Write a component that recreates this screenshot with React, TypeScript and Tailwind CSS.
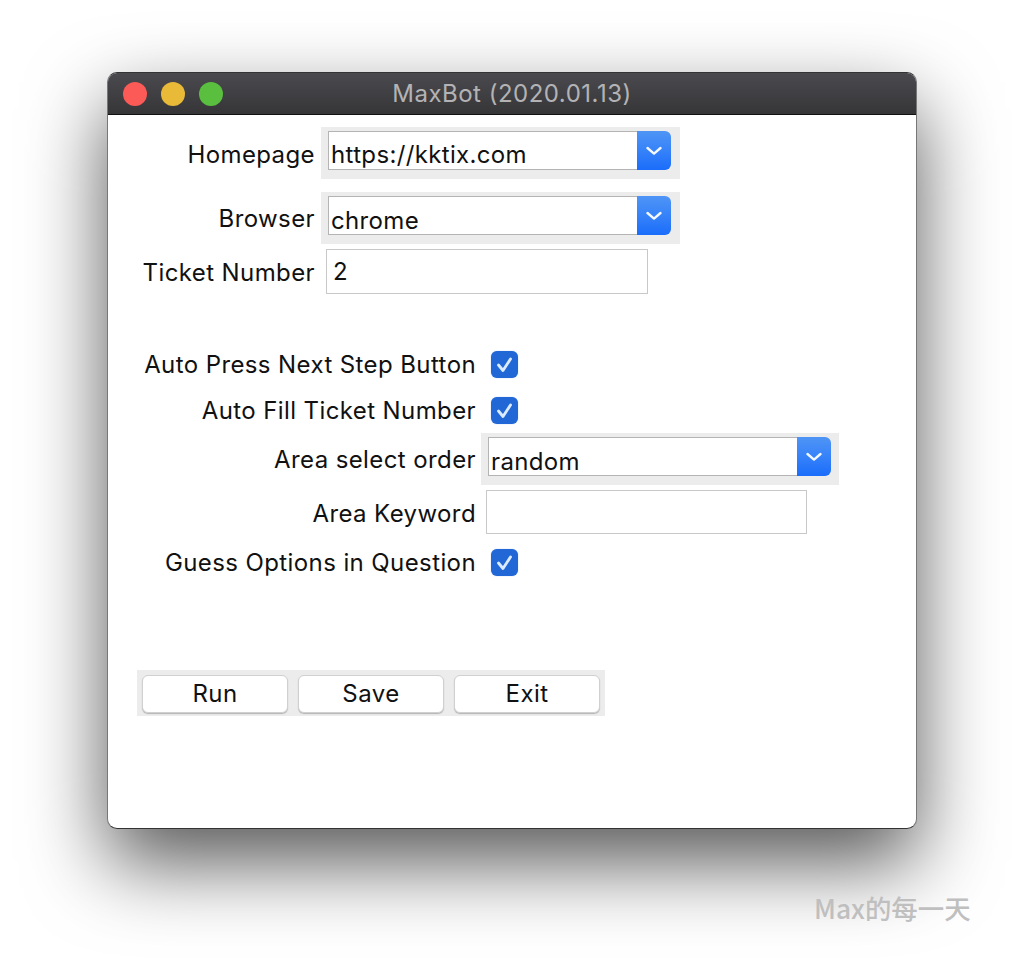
import React from 'react';

const FONT = "font-['Inter','Noto_Sans',sans-serif]";

const Chevron = () => (
  <svg width="18" height="12" viewBox="0 0 18 12" fill="none">
    <path d="M2.5 3l6.5 5.6L15.5 3" stroke="#f4f8ff" strokeWidth="2.4" strokeLinecap="round" strokeLinejoin="round" />
  </svg>
);

const Select: React.FC<{ value: string; textClass?: string; className?: string; width: string }> = ({ value, textClass, className, width }) => (
  <div className={`h-[52px] bg-[#ececec] pl-[7px] pt-[4px] ${width} ${className ?? ''}`}>
    <div className="flex h-[39px] w-[343px]">
      <div className={`flex-1 border border-r-0 border-[#b4b4b4] bg-white pl-[2px] text-[24px] leading-[38px] tracking-[0.35px] text-[#111] ${textClass ?? ''}`}>
        {value}
      </div>
      <div className="flex w-[34px] items-center justify-center rounded-r-[6px] bg-gradient-to-b from-[#4f95f6] to-[#1a6dfb]">
        <Chevron />
      </div>
    </div>
  </div>
);

const Checkbox = () => (
  <div className="flex h-[27px] w-[27px] items-center justify-center rounded-[6px] bg-[#2267d6] shadow-[0_0_1px_#7fa8e8]">
    <svg width="21" height="19" viewBox="0 0 21 19" fill="none">
      <path d="M4.5 10l4.5 5.5L16.5 4" stroke="#dcecff" strokeWidth="2.8" strokeLinecap="round" strokeLinejoin="round" />
    </svg>
  </div>
);

const Label: React.FC<{ children: React.ReactNode; width: string }> = ({ children, width }) => (
  <div className={`shrink-0 text-right text-[24px] tracking-[0.4px] text-[#111] ${width}`}>{children}</div>
);

const ActionButton: React.FC<{ label: string }> = ({ label }) => (
  <div className="flex h-[38px] w-[146px] items-center justify-center rounded-[6px] border border-[#d0d0d0] bg-white text-[24px] tracking-[0.45px] text-[#111] shadow-[0_1px_1px_#b5b5b5]">
    {label}
  </div>
);

export default function App() {
  return (
    <div className={`relative h-[970px] w-[1024px] overflow-hidden bg-white pl-[107px] pt-[72px] ${FONT}`}>
      <div className="h-[757px] w-[810px] overflow-hidden rounded-[10px] border border-x-[#777] border-y-[#333] bg-white shadow-[0_34px_80px_rgba(0,0,0,0.66)]">
        <div className="relative flex h-[42px] items-center justify-center border-b border-[#111] bg-gradient-to-b from-[#4a4a4e] to-[#363639]">
          <div className="absolute left-[15px] top-[9px] flex gap-[14px]">
            <span className="h-[24px] w-[24px] rounded-full bg-[#fb5a57]" />
            <span className="h-[24px] w-[24px] rounded-full bg-[#e8ba38]" />
            <span className="h-[24px] w-[24px] rounded-full bg-[#5abf3f]" />
          </div>
          <span className="text-[24px] tracking-[0.5px] text-[#b3b3b5]">MaxBot (2020.01.13)</span>
        </div>

        <div className="pl-[29px] pt-[12px]">
          <div className="flex h-[52px]">
            <Label width="w-[178px] pt-[10px]">Homepage</Label>
            <Select value="https://kktix.com" textClass="pt-[4px]" width="ml-[6px] w-[359px]" />
          </div>
          <div className="mt-[13px] flex h-[52px]">
            <Label width="w-[178px] pt-[9px]">Browser</Label>
            <Select value="chrome" textClass="pt-[5px]" width="ml-[6px] w-[359px]" />
          </div>
          <div className="mt-[5px] flex h-[45px]">
            <Label width="w-[178px] pt-[6px]">Ticket Number</Label>
            <div className="ml-[11px] h-[45px] w-[322px] border border-[#c8c8c8] bg-white pl-[6px] text-[24px] leading-[43px] text-[#111]">2</div>
          </div>

          <div className="mt-[57px] flex h-[27px] items-center">
            <Label width="w-[339px]">Auto Press Next Step Button</Label>
            <div className="ml-[15px]"><Checkbox /></div>
          </div>
          <div className="mt-[19px] flex h-[27px] items-center">
            <Label width="w-[339px]">Auto Fill Ticket Number</Label>
            <div className="ml-[15px]"><Checkbox /></div>
          </div>
          <div className="mt-[9px] flex h-[52px]">
            <Label width="w-[339px] pt-[9px]">Area select order</Label>
            <Select value="random" textClass="pt-[5px]" width="ml-[5px] w-[358px]" />
          </div>
          <div className="mt-[5px] flex h-[44px]">
            <Label width="w-[339px] pt-[6px]">Area Keyword</Label>
            <div className="ml-[10px] h-[44px] w-[321px] border border-[#c8c8c8] bg-white" />
          </div>
          <div className="mt-[15px] flex h-[27px] items-center">
            <Label width="w-[339px]">Guess Options in Question</Label>
            <div className="ml-[15px]"><Checkbox /></div>
          </div>

          <div className="mt-[94px] flex h-[46px] w-[468px] gap-[10px] bg-[#ececec] py-[5px] pl-[5px] pb-[3px]">
            <ActionButton label="Run" />
            <ActionButton label="Save" />
            <ActionButton label="Exit" />
          </div>
        </div>
      </div>

      <div className="absolute left-[814px] top-[888px] font-['Noto_Sans_CJK_SC','Noto_Sans',sans-serif] text-[26.4px] font-medium text-[#bfbfbf]">
        Max的每一天
      </div>
    </div>
  );
}
